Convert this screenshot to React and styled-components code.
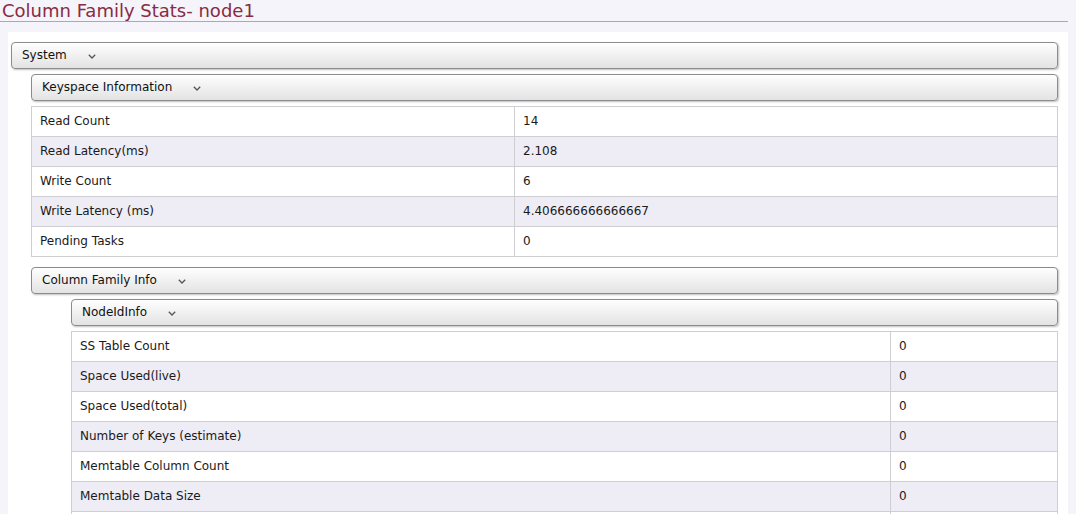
import React from "react";
import styled, { createGlobalStyle } from "styled-components";

const Global = createGlobalStyle`
  html, body { margin: 0; padding: 0; }
  body {
    background: #f4f4fa;
    font-family: "DejaVu Sans", "Liberation Sans", sans-serif;
    font-size: 12px;
    color: #222;
    overflow: hidden;
  }
`;

const Page = styled.div`
  padding-right: 8px;
`;

const Title = styled.h1`
  margin: 0;
  padding-left: 2px;
  font-size: 18px;
  font-weight: normal;
  line-height: 21px;
  color: #8a2b42;
  border-bottom: 1px solid #a2a9c8;
`;

const Panel = styled.div`
  margin: 10px 0 0 8px;
  padding: 10px 10px 0 3px;
  background: #fff;
  min-height: calc(100vh - 42px);
`;

const Section = styled.section`
  display: flex;
  flex-direction: column;
  gap: 5px;
`;

const Header = styled.div`
  display: flex;
  align-items: center;
  height: 25px;
  padding: 0 10px;
  border: 1px solid #8c8c8c;
  border-radius: 4px;
  background: linear-gradient(#fefefe, #e3e3e3);
  box-shadow: 1px 1px 2px rgba(0, 0, 0, 0.25);
  line-height: 15px;
  color: #111;
`;

const Chevron = styled.svg`
  margin-left: 21px;
  margin-top: 2px;
  flex: none;
`;

const Body = styled.div`
  display: flex;
  flex-direction: column;
  gap: 10px;
  padding-left: ${(p) => p.$indent}px;
`;

const Table = styled.table`
  width: 100%;
  border-collapse: collapse;
  font-size: 12px;
`;

const Row = styled.tr`
  background: ${(p) => (p.$alt ? "#eeecf5" : "#fff")};
`;

const Cell = styled.td`
  border: 1px solid #cfcfd3;
  padding: 7px 8px;
  line-height: 15px;
  color: #1a1a1a;
  white-space: nowrap;
  width: ${(p) => (p.$w ? `${p.$w}px` : "auto")};
`;

function Toggle({ title, indent = 20, children }) {
  return (
    <Section>
      <Header>
        <span>{title}</span>
        <Chevron width="8" height="5" viewBox="0 0 8 5">
          <polyline points="0.8,0.8 4,4 7.2,0.8" fill="none" stroke="#555" strokeWidth="1.3" />
        </Chevron>
      </Header>
      <Body $indent={indent}>{children}</Body>
    </Section>
  );
}

function StatTable({ rows, labelWidth }) {
  return (
    <Table>
      <tbody>
        {rows.map(([k, v], i) => (
          <Row key={k} $alt={i % 2 === 1}>
            <Cell $w={labelWidth}>{k}</Cell>
            <Cell>{v}</Cell>
          </Row>
        ))}
      </tbody>
    </Table>
  );
}

const keyspace = [
  ["Read Count", "14"],
  ["Read Latency(ms)", "2.108"],
  ["Write Count", "6"],
  ["Write Latency (ms)", "4.406666666666667"],
  ["Pending Tasks", "0"],
];

const nodeInfo = [
  ["SS Table Count", "0"],
  ["Space Used(live)", "0"],
  ["Space Used(total)", "0"],
  ["Number of Keys (estimate)", "0"],
  ["Memtable Column Count", "0"],
  ["Memtable Data Size", "0"],
  ["Memtable Switch Count", "0"],
];

export default function App() {
  return (
    <Page>
      <Global />
      <Title>Column Family Stats- node1</Title>
      <Panel>
        <Toggle title="System" indent={20}>
          <Section>
            <Toggle title="Keyspace Information" indent={0}>
              <StatTable rows={keyspace} labelWidth={466} />
            </Toggle>
          </Section>
          <Toggle title="Column Family Info" indent={40}>
            <Toggle title="NodeIdInfo" indent={0}>
              <StatTable rows={nodeInfo} labelWidth={802} />
            </Toggle>
          </Toggle>
        </Toggle>
      </Panel>
    </Page>
  );
}
